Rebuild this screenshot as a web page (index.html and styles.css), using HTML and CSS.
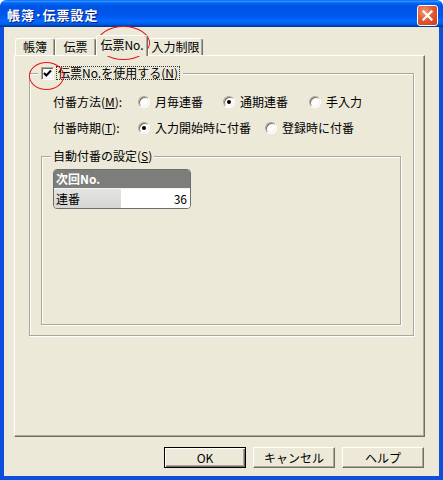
FILE: index.html
```html
<!DOCTYPE html>
<html lang="ja">
<head>
<meta charset="utf-8">
<title>帳簿･伝票設定</title>
<link rel="stylesheet" href="styles.css">
</head>
<body>
<div class="window">
  <div class="titlebar">
    <span class="title">帳簿･伝票設定</span>
    <button class="close" aria-label="閉じる">
      <svg width="11" height="11" viewBox="0 0 11 11"><path d="M1.5 1.5 L9.5 9.5 M9.5 1.5 L1.5 9.5" stroke="#fff" stroke-width="2.2" stroke-linecap="square"/></svg>
    </button>
  </div>
  <div class="client">
    <div class="tabs">
      <div class="tab t1">帳簿</div>
      <div class="tab t2">伝票</div>
      <div class="tab t3 active">伝票No.</div>
      <div class="tab t4">入力制限</div>
    </div>
    <div class="panel">
      <div class="group outer">
        <div class="legend check-legend">
          <span class="checkbox"><svg width="9" height="9" viewBox="0 0 9 9"><path d="M1 4 L3.3 6.5 L8 1.5" fill="none" stroke="#000" stroke-width="2"/></svg></span>
          <span class="focus">伝票No.を使用する(<u>N</u>)</span>
        </div>
        <div class="row first">
          <span class="row-label">付番方法(<u>M</u>):</span>
          <span class="opt w85"><span class="radio"></span>月毎連番</span>
          <span class="opt w86"><span class="radio on"></span>通期連番</span>
          <span class="opt"><span class="radio"></span>手入力</span>
        </div>
        <div class="row second">
          <span class="row-label">付番時期(<u>T</u>):</span>
          <span class="opt w127"><span class="radio on"></span>入力開始時に付番</span>
          <span class="opt"><span class="radio"></span>登録時に付番</span>
        </div>
        <div class="group inner">
          <div class="legend inner-legend">自動付番の設定(<u>S</u>)</div>
          <div class="grid">
            <div class="grid-head">次回No.</div>
            <div class="grid-row"><span class="cell-name">連番</span><span class="cell-val">36</span></div>
          </div>
        </div>
      </div>
    </div>
    <div class="buttons">
      <button class="btn default">OK</button>
      <button class="btn">キャンセル</button>
      <button class="btn">ヘルプ</button>
    </div>
  </div>
  <div class="mark mark-tab"></div>
  <div class="mark mark-check"></div>
</div>
</body>
</html>
```

FILE: styles.css
```css
* { box-sizing: border-box; }
html, body { margin: 0; padding: 0; background: #fff; }
body {
  font-family: "Noto Sans CJK JP", "Noto Sans", sans-serif;
  font-size: 12px;
  line-height: 14px;
  color: #000;
}
u { text-decoration: underline; text-underline-offset: 1px; }

.window {
  position: relative;
  width: 443px;
  height: 480px;
  display: flex;
  flex-direction: column;
}

.titlebar {
  height: 27px;
  flex: none;
  display: flex;
  align-items: center;
  justify-content: space-between;
  padding: 3px 5px 0 7px;
  border-radius: 6px 6px 0 0;
  background: linear-gradient(to bottom,
    #0058ee 0%, #3593ff 4%, #288eff 6%, #127dff 8%, #036ffc 10%,
    #0262ee 14%, #0057e5 20%, #0054e3 24%, #0055eb 56%, #005bf5 66%,
    #026afe 76%, #0062ef 86%, #0052d6 92%, #0040ab 96%, #003092 100%);
}
.title {
  color: #fff;
  font-weight: bold;
  font-size: 13px;
  line-height: 16px;
  letter-spacing: 1px;
  text-shadow: 1px 1px 0 #0a1b80;
}
.close {
  width: 21px;
  height: 21px;
  padding: 0;
  border: 1px solid #fff;
  border-radius: 3px;
  background: radial-gradient(circle at 35% 30%, #f29a78 0%, #e45c33 45%, #c73b16 100%);
  display: flex;
  align-items: center;
  justify-content: center;
}

.client {
  flex: 1;
  display: flex;
  flex-direction: column;
  background: #ece9d8;
  border: 4px solid #0b4fdc;
  border-top: 0;
  padding: 8px 14px 8px 10px;
}

.tabs {
  display: flex;
  align-items: flex-end;
  height: 20px;
  padding-left: 1px;
}
.tab {
  height: 17px;
  line-height: 15px;
  text-align: center;
  background: #ece9d8;
  border-top: 1px solid #fff;
  border-left: 1px solid #fff;
  border-right: 1px solid #716f64;
  box-shadow: inset -1px 0 0 #aca899;
  border-radius: 3px 3px 0 0;
}
.t1 { width: 40px; }
.t2 { width: 41px; }
.t3 { width: 52px; }
.t4 { width: 55px; }
.tab.active {
  height: 21px;
  margin-bottom: -1px;
  line-height: 18px;
  position: relative;
  z-index: 1;
}

.panel {
  flex: 1;
  border: 1px solid;
  border-color: #fff #716f64 #716f64 #fff;
  box-shadow: inset -1px -1px 0 #aca899;
  padding: 17px 10px 0 14px;
}

.group {
  border: 1px solid #aca899;
  box-shadow: inset 1px 1px 0 #fff, 1px 1px 0 #fff;
}
.legend {
  display: flex;
  align-items: center;
  width: max-content;
  height: 14px;
  margin-top: -8px;
  background: #ece9d8;
}

.outer {
  padding: 0 12px 10px 11px;
}
.check-legend {
  margin-left: -3px;
  padding: 0 3px;
}
.checkbox {
  width: 13px;
  height: 13px;
  flex: none;
  border: 1px solid;
  border-color: #aca899 #fff #fff #aca899;
  background: #fff;
  box-shadow: inset 1px 1px 0 #716f64, inset -1px -1px 0 #f1efe2;
  display: flex;
  align-items: center;
  justify-content: center;
}
.focus {
  margin-left: 2px;
  padding: 0 1px;
  height: 14px;
  line-height: 12px;
  border: 1px dotted #333;
}

.row {
  display: flex;
  align-items: center;
  height: 20px;
  padding-left: 12px;
}
.row.first { margin-top: 12px; }
.row.second { margin-top: 6px; }
.row-label { width: 85px; flex: none; }
.opt {
  display: inline-flex;
  align-items: center;
  flex: none;
}
.w85 { width: 85px; }
.w86 { width: 86px; }
.w127 { width: 127px; }
.radio {
  width: 12px;
  height: 12px;
  flex: none;
  margin-right: 5px;
  border-radius: 50%;
  border: 1px solid;
  border-color: #aca899 #fff #fff #aca899;
  background: #fff;
  box-shadow: inset 1px 1px 0 #716f64, inset -1px -1px 0 #f1efe2;
  display: inline-flex;
  align-items: center;
  justify-content: center;
}
.radio.on::after {
  content: "";
  width: 4px;
  height: 4px;
  border-radius: 50%;
  background: #000;
}

.inner {
  margin-top: 18px;
  height: 169px;
  padding: 0 0 0 11px;
}
.inner-legend {
  margin-left: -2px;
  padding: 0 2px;
}

.grid {
  margin-top: 6px;
  width: 138px;
  border: 1px solid #6e6e6e;
  border-radius: 4px;
  overflow: hidden;
}
.grid-head {
  height: 18px;
  line-height: 18px;
  padding-left: 2px;
  background: #7d7d7a;
  color: #fff;
  font-weight: bold;
}
.grid-row {
  display: flex;
  height: 20px;
  line-height: 19px;
  border-top: 1px solid #f4f4f4;
}
.cell-name {
  width: 67px;
  padding-left: 2px;
  background: linear-gradient(#e4e4e2, #d6d6d3);
}
.cell-val {
  flex: 1;
  background: #fff;
  text-align: right;
  padding-right: 3px;
}

.buttons {
  display: flex;
  justify-content: flex-end;
  gap: 7px;
  margin-top: 10px;
  padding-right: 1px;
}
.btn {
  width: 82px;
  height: 21px;
  padding: 0;
  font-family: inherit;
  font-size: 12px;
  line-height: 17px;
  color: #000;
  background: #ece9d8;
  border: 1px solid;
  border-color: #fff #716f64 #716f64 #fff;
  box-shadow: inset -1px -1px 0 #aca899;
}
.btn.default {
  border: 1px solid #000;
  box-shadow: inset 1px 1px 0 #fff, inset -1px -1px 0 #716f64, inset -2px -2px 0 #aca899;
}

.mark {
  position: absolute;
  border: 1px solid #e8131b;
  border-radius: 50%;
  pointer-events: none;
}
.mark-tab { left: 97px; top: 26px; width: 53px; height: 34px; }
.mark-check { left: 29px; top: 62px; width: 35px; height: 28px; }
```
